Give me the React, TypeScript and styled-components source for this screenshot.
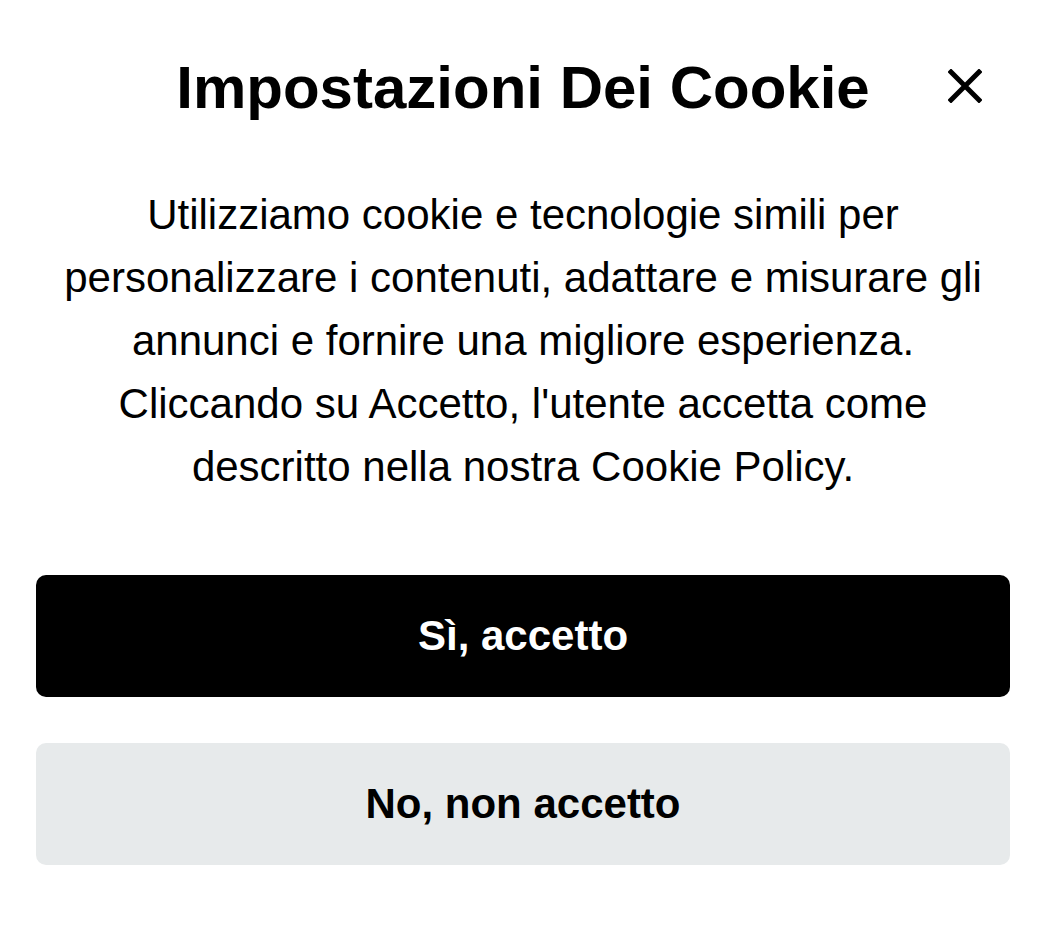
import React from "react";
import styled, { createGlobalStyle } from "styled-components";

const GlobalStyle = createGlobalStyle`
  html, body {
    margin: 0;
    padding: 0;
    background: #ffffff;
  }
  body {
    font-family: "Liberation Sans", Arial, sans-serif;
    color: #000000;
  }
  * { box-sizing: border-box; }
`;

const Dialog = styled.div`
  width: 1051px;
  padding: 52px 41px 0 36px;
  display: flex;
  flex-direction: column;
`;

const Header = styled.header`
  display: grid;
  grid-template-columns: 1fr auto 1fr;
  align-items: center;
`;

const Title = styled.h1`
  grid-column: 2;
  margin: 0;
  font-size: 60px;
  line-height: 72px;
  font-weight: 700;
  text-align: center;
  white-space: nowrap;
`;

const CloseButton = styled.button`
  grid-column: 3;
  justify-self: end;
  width: 90px;
  height: 72px;
  margin-top: -4px;
  border: none;
  background: transparent;
  padding: 0;
  display: flex;
  align-items: center;
  justify-content: center;
  cursor: pointer;
`;

const Body = styled.p`
  margin: 59px auto 0;
  max-width: 950px;
  font-size: 42px;
  line-height: 63px;
  text-align: center;
`;

const Actions = styled.div`
  margin-top: 77px;
  display: flex;
  flex-direction: column;
  gap: 46px;
`;

const ActionButton = styled.button<{ $primary?: boolean }>`
  height: 122px;
  width: 100%;
  border: none;
  border-radius: 10px;
  font-family: "Liberation Sans", Arial, sans-serif;
  font-size: 42px;
  font-weight: 700;
  background: ${(p) => (p.$primary ? "#000000" : "#e7eaeb")};
  color: ${(p) => (p.$primary ? "#ffffff" : "#000000")};
  cursor: pointer;
`;

export default function App() {
  return (
    <>
      <GlobalStyle />
      <Dialog>
        <Header>
          <Title>Impostazioni Dei Cookie</Title>
          <CloseButton aria-label="Chiudi">
            <svg width="34" height="34" viewBox="0 0 34 34" fill="none">
              <path
                d="M3 3 L31 31 M31 3 L3 31"
                stroke="#000"
                strokeWidth="5"
                strokeLinecap="square"
              />
            </svg>
          </CloseButton>
        </Header>
        <Body>
          Utilizziamo cookie e tecnologie simili per personalizzare i
          contenuti, adattare e misurare gli annunci e fornire una migliore
          esperienza. Cliccando su Accetto, l'utente accetta come descritto
          nella nostra Cookie Policy.
        </Body>
        <Actions>
          <ActionButton $primary>Sì, accetto</ActionButton>
          <ActionButton>No, non accetto</ActionButton>
        </Actions>
      </Dialog>
    </>
  );
}
